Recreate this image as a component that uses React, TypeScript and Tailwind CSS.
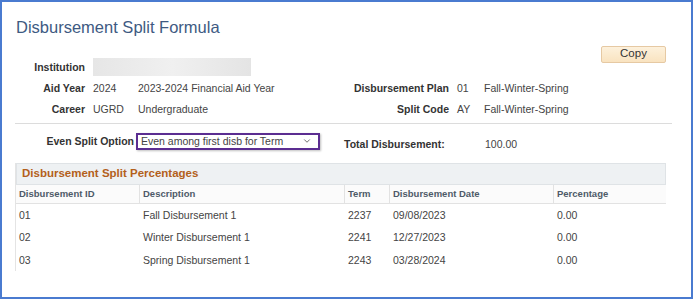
import { ChevronDown } from 'lucide-react'

const ROWS = [
  { id: '01', desc: 'Fall Disbursement 1', term: '2237', date: '09/08/2023', pct: '0.00' },
  { id: '02', desc: 'Winter Disbursement 1', term: '2241', date: '12/27/2023', pct: '0.00' },
  { id: '03', desc: 'Spring Disbursement 1', term: '2243', date: '03/28/2024', pct: '0.00' },
]

const COLS = ['w-[123px]', 'w-[205px]', 'w-[45px]', 'w-[164px]', 'flex-1']

function Field({ label, code, text, labelW, codeW }: { label: string; code: string; text: string; labelW: string; codeW: string }) {
  return (
    <div className="flex h-[21px] items-center">
      <span className={`${labelW} text-right font-bold text-[#333]`}>{label}</span>
      <span className={`ml-2 ${codeW} text-[#444]`}>{code}</span>
      <span className="text-[#444]">{text}</span>
    </div>
  )
}

export default function App() {
  return (
    <div className="h-[299px] w-[693px] border-2 border-[#4a7bd0] bg-white font-['Liberation_Sans',Arial,sans-serif] text-[10.5px] leading-none">
      <h1 className="pl-[14px] pt-[17px] text-[16.5px] text-[#3e5a82]">Disbursement Split Formula</h1>

      <div className="flex pt-[10px]">
        <div className="w-[338px] pt-[11px]">
          <div className="flex h-[21px] items-center">
            <span className="w-[83px] text-right font-bold text-[#333]">Institution</span>
            <span className="ml-2 h-[18px] w-[158px] bg-gradient-to-r from-[#e6e6e6] via-[#f0f0f0] to-[#e4e4e4]" />
          </div>
          <Field label="Aid Year" code="2024" text="2023-2024 Financial Aid Year" labelW="w-[83px]" codeW="w-[45px]" />
          <Field label="Career" code="UGRD" text="Undergraduate" labelW="w-[83px]" codeW="w-[45px]" />
        </div>
        <div className="flex-1">
          <div className="flex justify-end pr-[25px]">
            <button className="h-[17px] w-[65px] rounded-[2px] border border-[#e6c9a3] bg-gradient-to-b from-[#fdf1dc] to-[#f9e3c0] text-[11.5px] text-[#333]">
              Copy
            </button>
          </div>
          <div className="mt-[15px]">
            <Field label="Disbursement Plan" code="01" text="Fall-Winter-Spring" labelW="w-[109px]" codeW="w-[27px]" />
            <Field label="Split Code" code="AY" text="Fall-Winter-Spring" labelW="w-[109px]" codeW="w-[27px]" />
          </div>
        </div>
      </div>

      <div className="ml-[13px] mr-[19px] mt-[3px] h-px bg-[#dcdcdc]" />

      <div className="mt-[9px] flex items-center">
        <span className="w-[132px] text-right font-bold text-[#333]">Even Split Option</span>
        <div className="ml-[2px] flex h-[17px] w-[184px] items-center justify-between whitespace-nowrap border-2 border-[#5b2d91] pl-[3px] pr-[6px] text-[10.5px] text-[#444] shadow-[1px_1px_2px_rgba(0,0,0,0.25)]">
          <span>Even among first disb for Term</span>
          <ChevronDown size={10} strokeWidth={2} className="text-[#555]" />
        </div>
        <span className="ml-[24px] mt-[6px] w-[141px] font-bold text-[#333]">Total Disbursement:</span>
        <span className="mt-[6px] text-[#444]">100.00</span>
      </div>

      <div className="ml-[13px] mr-[25px] mt-[13px] border-l border-[#e4e4e4]">
        <div className="flex h-[22px] items-center border border-[#dfe3e6] bg-[#eef1f3] pl-[5px] text-[11.5px] font-bold text-[#b3601b]">
          Disbursement Split Percentages
        </div>
        <div className="flex h-[19px] items-center border-b border-[#e2e2e2] bg-[#fbfbfb] text-[9.5px] font-bold text-[#4e5a68]">
          {['Disbursement ID', 'Description', 'Term', 'Disbursement Date', 'Percentage'].map((h, i) => (
            <div key={h} className={`${COLS[i]} flex h-full items-center px-[3px] ${i > 0 ? 'border-l border-[#e2e2e2]' : ''}`}>
              {h}
            </div>
          ))}
        </div>
        {ROWS.map((r) => (
          <div key={r.id} className="flex h-[22.5px] items-center text-[#444]">
            {[r.id, r.desc, r.term, r.date, r.pct].map((v, i) => (
              <div key={i} className={`${COLS[i]} px-[3px] ${i > 0 ? 'pl-[4px]' : ''}`}>
                {v}
              </div>
            ))}
          </div>
        ))}
      </div>
    </div>
  )
}
